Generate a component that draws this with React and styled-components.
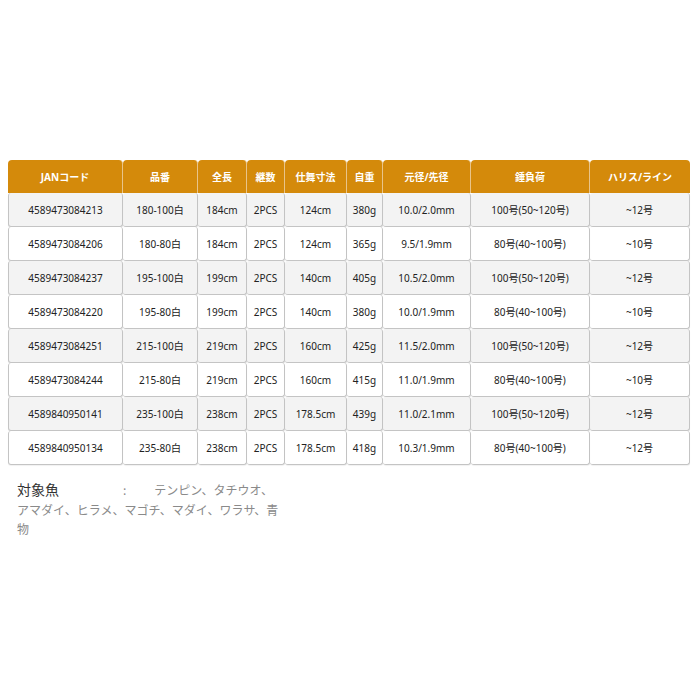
import styled, { createGlobalStyle } from 'styled-components'

const GlobalStyle = createGlobalStyle`
  html, body {
    margin: 0;
    padding: 0;
    background: #fff;
  }
  body {
    font-family: "Noto Sans", "Noto Sans CJK JP", sans-serif;
  }
`

const columns = [
  { label: 'JANコード', width: 115 },
  { label: '品番', width: 75 },
  { label: '全長', width: 49 },
  { label: '継数', width: 38 },
  { label: '仕舞寸法', width: 62 },
  { label: '自重', width: 36 },
  { label: '元径/先径', width: 88 },
  { label: '錘負荷', width: 119 },
  { label: 'ハリス/ライン', width: 100 },
]

const rows = [
  ['4589473084213', '180-100白', '184cm', '2PCS', '124cm', '380g', '10.0/2.0mm', '100号(50~120号)', '~12号'],
  ['4589473084206', '180-80白', '184cm', '2PCS', '124cm', '365g', '9.5/1.9mm', '80号(40~100号)', '~10号'],
  ['4589473084237', '195-100白', '199cm', '2PCS', '140cm', '405g', '10.5/2.0mm', '100号(50~120号)', '~12号'],
  ['4589473084220', '195-80白', '199cm', '2PCS', '140cm', '380g', '10.0/1.9mm', '80号(40~100号)', '~10号'],
  ['4589473084251', '215-100白', '219cm', '2PCS', '160cm', '425g', '11.5/2.0mm', '100号(50~120号)', '~12号'],
  ['4589473084244', '215-80白', '219cm', '2PCS', '160cm', '415g', '11.0/1.9mm', '80号(40~100号)', '~10号'],
  ['4589840950141', '235-100白', '238cm', '2PCS', '178.5cm', '439g', '11.0/2.1mm', '100号(50~120号)', '~12号'],
  ['4589840950134', '235-80白', '238cm', '2PCS', '178.5cm', '418g', '10.3/1.9mm', '80号(40~100号)', '~12号'],
]

const App = () => {
  return (
    <Page>
      <GlobalStyle />
      <SpecTable>
        <colgroup>
          {columns.map((c) => (
            <col key={c.label} style={{ width: c.width }} />
          ))}
        </colgroup>
        <thead>
          <tr>
            {columns.map((c) => (
              <HeadCell key={c.label}>{c.label}</HeadCell>
            ))}
          </tr>
        </thead>
        <tbody>
          {rows.map((row, i) => (
            <Row key={row[0]} $shaded={i % 2 === 0}>
              {row.map((v, j) => (
                <Cell key={j}>{v}</Cell>
              ))}
            </Row>
          ))}
        </tbody>
      </SpecTable>
      <Note>
        <NoteLabel>対象魚</NoteLabel>
        <Colon>:</Colon>
        <span>テンピン、タチウオ、アマダイ、ヒラメ、マゴチ、マダイ、ワラサ、青物</span>
      </Note>
    </Page>
  );
}

export default App;

const Page = styled.main`
  padding: 160px 3px 0 8px;
`

const SpecTable = styled.table`
  width: 682px;
  table-layout: fixed;
  border-collapse: separate;
  border-spacing: 0;
  font-size: 10px;
  color: #222;
`

const HeadCell = styled.th`
  height: 33px;
  padding: 0;
  background: #d48a0b;
  color: #fff;
  font-weight: 700;
  font-size: 10px;
  text-align: center;
  vertical-align: middle;
  border-right: 1px solid #e9c48a;
  border-radius: 4px 4px 0 0;

  &:last-child {
    border-right: none;
  }
`

const Row = styled.tr`
  background: ${(p) => (p.$shaded ? '#f3f3f3' : '#ffffff')};
`

const Cell = styled.td`
  height: 33px;
  padding: 0;
  text-align: center;
  vertical-align: middle;
  white-space: nowrap;
  border-right: 1px solid #c4c4c4;
  border-bottom: 1px solid #c4c4c4;
  border-radius: 3px;
  box-shadow: 0 1px 1px rgba(0, 0, 0, 0.06);

  &:first-child {
    border-left: 1px solid #c4c4c4;
  }
`

const Note = styled.p`
  width: 266px;
  margin: 15px 0 0 9px;
  font-family: "Noto Sans CJK JP", sans-serif;
  font-size: 12px;
  line-height: 19.5px;
  color: #8a8a8a;
`

const NoteLabel = styled.span`
  margin-right: 64px;
  font-size: 14px;
  color: #333;
`

const Colon = styled.span`
  margin-right: 28px;
`
